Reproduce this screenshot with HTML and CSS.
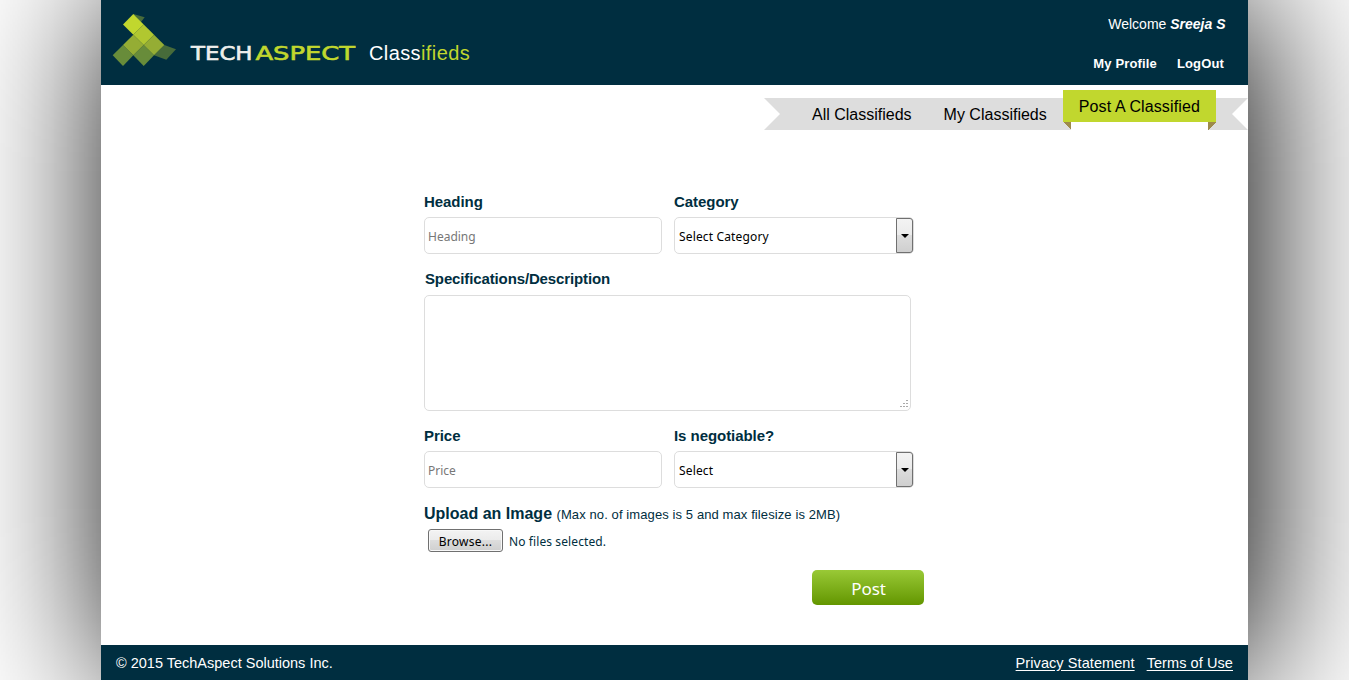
FILE: index.html
```html
<!DOCTYPE html>
<html lang="en">
<head>
<meta charset="utf-8">
<title>TechAspect Classifieds</title>
<link rel="stylesheet" href="styles.css">
</head>
<body>
<div class="page">
  <header class="header">
    <div class="brand">
      <svg class="logo" width="245" height="56" viewBox="0 0 245 56">
        <path d="M20.300 1L31.700 4.300 28 9z" fill="#476b3a"/>
        <path d="M51.300 32L63 36.300 53.300 46.700 41 42.300z" fill="#476b3a"/>
        <path d="M10 32L20.300 42.300 10 53-.3 42.300z" fill="#688c3a"/>
        <path d="M30.700 32L41 42.300 30.700 53 20.300 42.300z" fill="#688c3a"/>
        <path d="M20.300 21.700L30.700 32 20.300 42.300 10 32z" fill="#95ad34"/>
        <path d="M41 21.700L51.300 32 41 42.300 30.700 32z" fill="#95ad34"/>
        <path d="M30.700 11.400L41 21.700 30.700 32 20.300 21.700z" fill="#b1c730"/>
        <path d="M20.300 1L30.700 11.400 20.300 21.700 10 11.400z" fill="#c1d72e"/>
        <g class="wordmark">
          <text x="78" y="46.500" textLength="61.500" lengthAdjust="spacingAndGlyphs" fill="#eeeeec" stroke="#eeeeec">TECH</text>
          <text x="142.500" y="46.500" textLength="99.500" lengthAdjust="spacingAndGlyphs" fill="#c1d72e" stroke="#c1d72e">ASPECT</text>
        </g>
      </svg>
      <span class="product">Class<span class="accent">ifieds</span></span>
    </div>
    <div class="account">
      <div class="welcome">Welcome <b><i>Sreeja S</i></b></div>
      <div class="links"><a>My Profile</a><a>LogOut</a></div>
    </div>
  </header>

  <nav class="ribbon">
    <a>All Classifieds</a>
    <a>My Classifieds</a>
    <a class="active">Post A Classified</a>
  </nav>

  <form class="form">
    <div class="field heading">
      <label>Heading</label>
      <input class="box" placeholder="Heading">
    </div>
    <div class="field">
      <label>Category</label>
      <div class="box select"><span>Select Category</span><i class="drop"></i></div>
    </div>
    <div class="field wide">
      <label>Specifications/Description</label>
      <div class="area">
        <svg width="8" height="8" fill="#aaa"><path d="M6 0h2v1H6zM3 3h2v1H3zM6 3h2v1H6zM0 6h2v1H0zM3 6h2v1H3zM6 6h2v1H6z"/></svg>
      </div>
    </div>
    <div class="field">
      <label>Price</label>
      <input class="box" placeholder="Price">
    </div>
    <div class="field">
      <label>Is negotiable?</label>
      <div class="box select"><span>Select</span><i class="drop"></i></div>
    </div>
    <div class="upload">
      <div class="upload-title"><b>Upload an Image</b> <span>(Max no. of images is 5 and max filesize is 2MB)</span></div>
      <div class="file"><button type="button">Browse...</button><span>No files selected.</span></div>
    </div>
    <button type="button" class="post">Post</button>
  </form>

  <footer class="footer">
    <span>© 2015 TechAspect Solutions Inc.</span>
    <div class="legal"><a>Privacy Statement</a><a>Terms of Use</a></div>
  </footer>
</div>
</body>
</html>
```
FILE: styles.css
```css
* { box-sizing: border-box; }
body {
  margin: 0;
  height: 680px;
  overflow: hidden;
  background: #fff;
  color: #002e40;
  font-family: "Liberation Sans", Arial, sans-serif;
}
.page {
  width: 1147px;
  height: 680px;
  margin-left: 101px;
  display: flex;
  flex-direction: column;
  background: #fff;
  box-shadow: 10px 0 150px #000;
}
.header {
  height: 85px;
  flex: none;
  display: flex;
  justify-content: space-between;
  background: #002e40;
  color: #fff;
}
.brand { display: flex; padding: 13px 0 0 12px; }
.logo { flex: none; overflow: visible; }
.wordmark { font: 19.5px "DejaVu Sans", sans-serif; stroke-width: .6; }
.product { margin: 28px 0 0 11px; font-size: 20px; line-height: 24px; letter-spacing: .4px; }
.accent { color: #c1d72e; }
.account { padding-right: 21px; }
.welcome { margin-top: 16px; font-size: 14px; line-height: 16px; }
.links { display: flex; gap: 20px; margin: 24px 3px 0 -15px; font-size: 13px; line-height: 16px; font-weight: bold; letter-spacing: .15px; }

.ribbon {
  width: 484px;
  height: 32px;
  flex: none;
  margin: 13px 0 0 663px;
  padding-left: 32px;
  display: flex;
  background: #ddd;
  clip-path: polygon(0 0, 299px 0, 299px -8px, 452px -8px, 452px 0, 100% 0, 468px 50%, 100% 100%, 0 100%, 16px 50%);
  font-size: 16px;
  line-height: 34px;
  color: #000;
  white-space: nowrap;
}
.ribbon a { padding: 0 16px; }
.ribbon .active {
  position: relative;
  top: -8px;
  width: 153px;
  height: 32px;
  background: #c1d72e;
  letter-spacing: .12px;
}
.ribbon .active::after {
  content: "";
  position: absolute;
  inset: 32px 0 auto 0;
  height: 8px;
  background:
    linear-gradient(45deg, transparent 50%, #9d8a4b 50%) 0 0 / 8px 8px no-repeat,
    linear-gradient(-45deg, transparent 50%, #9d8a4b 50%) 100% 0 / 8px 8px no-repeat,
    linear-gradient(#fff, #fff) 8px 0 / calc(100% - 16px) 8px no-repeat;
}

.form {
  width: 500px;
  margin: 63px 0 0 323px;
  display: grid;
  grid-template-columns: 238px 240px;
  column-gap: 12px;
}
label { display: block; height: 24px; font-size: 15px; line-height: 18px; font-weight: bold; letter-spacing: -.05px; }
.field { height: 78px; }
.wide { grid-column: 1 / 3; height: 156px; margin-top: -1px; }
.wide label { margin-left: 1px; letter-spacing: -.13px; }
.wide + .field, .wide + .field + .field { height: 76px; margin-top: 1px; }
.box, .area { border: 1px solid #ddd; border-radius: 5px; background: #fff; }
.box { display: block; width: 100%; height: 37px; }
input.box, .select, .file { font-family: "Noto Sans", Tahoma, sans-serif; font-size: 12px; }
input.box { padding: 2px 3px 0; outline: 0; }
input::placeholder { color: #777; opacity: 1; }
.select { display: flex; justify-content: space-between; padding-left: 4px; color: #000; line-height: 37px; letter-spacing: .15px; }
.drop {
  width: 17px;
  height: 35px;
  border: 1px solid #707070;
  border-radius: 0 3px 3px 0;
  background: linear-gradient(#f3f3f3, #ebebeb 49%, #ddd 50%, #cfcfcf);
  display: grid;
  place-items: center;
}
.drop::after { content: ""; border: 4px solid transparent; border-top-color: #000; border-bottom: 0; }
.area { width: 487px; height: 116px; margin-top: 1px; display: flex; justify-content: flex-end; align-items: flex-end; padding: 2px; }
.upload { grid-column: 1 / 3; height: 67px; }
.upload-title { height: 26px; line-height: 22px; font-size: 16px; white-space: nowrap; }
.upload-title span { font-size: 13px; letter-spacing: .1px; }
.file { display: flex; gap: 6px; padding-left: 4px; line-height: 25px; letter-spacing: .1px; }
.file button {
  width: 75px;
  height: 23px;
  padding: 2px 0 0;
  border: 1px solid #707070;
  border-radius: 3px;
  background: linear-gradient(#f3f3f3, #ebebeb 49%, #ddd 50%, #cfcfcf);
  box-shadow: inset 0 0 0 1px #f8f8f8;
  font: inherit;
  line-height: 19px;
  letter-spacing: .25px;
}
.post {
  grid-column: 1 / 3;
  width: 112px;
  height: 35px;
  margin-left: 388px;
  border: 0;
  border-radius: 5px;
  background: linear-gradient(#99c936, #639600);
  color: #fff;
  font: 17px/35px "Noto Sans", Tahoma, sans-serif;
  letter-spacing: -.1px;
  padding: 1px 0 0 1px;
}
.footer {
  height: 35px;
  margin-top: auto;
  padding: 0 15px;
  display: flex;
  justify-content: space-between;
  background: #002e40;
  color: #fff;
  font-size: 14.5px;
  line-height: 36px;
}
.legal { display: flex; gap: 12px; letter-spacing: .08px; text-decoration: underline; text-underline-offset: 2px; }
```
